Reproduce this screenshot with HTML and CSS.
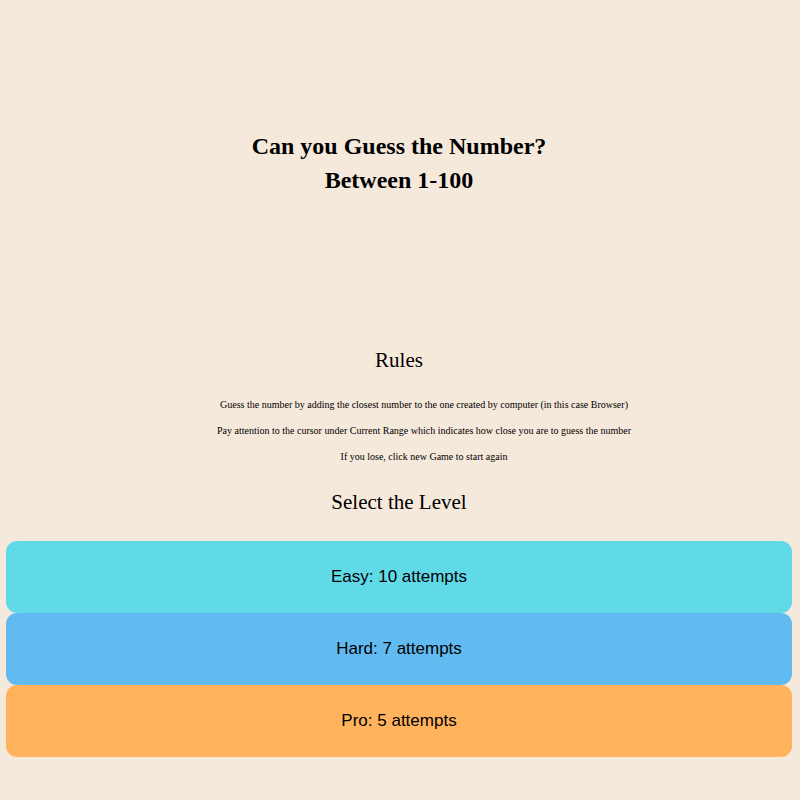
FILE: index.html
```
<!DOCTYPE html>
<html lang="en">
<head>
<meta charset="utf-8">
<meta name="viewport" content="width=device-width, initial-scale=1">
<title>Guess the Number</title>
<link rel="stylesheet" href="styles.css">
</head>
<body>
<header class="title">
<h1>Can you Guess the Number?<br>Between 1-100</h1>
</header>
<main>
<h2>Rules</h2>
<ul class="rules">
<li>Guess the number by adding the closest number to the one created by computer (in this case Browser)</li>
<li>Pay attention to the cursor under Current Range which indicates how close you are to guess the number</li>
<li>If you lose, click new Game to start again</li>
</ul>
<h2>Select the Level</h2>
<div class="levels">
<button type="button" class="level easy">Easy: 10 attempts</button>
<button type="button" class="level hard">Hard: 7 attempts</button>
<button type="button" class="level pro">Pro: 5 attempts</button>
</div>
</main>
</body>
</html>
```
FILE: styles.css
```
* {
  box-sizing: border-box;
}

body {
  margin: 0;
  padding: 129px 8px 40px 6px;
  background: #f5e9dc;
  color: #000;
  font-family: "Liberation Serif", serif;
  text-align: center;
}

.title {
  margin-bottom: 147px;
}

h1 {
  margin: 0;
  font-size: 24px;
  line-height: 34px;
}

h2 {
  margin: 0;
  font-size: 21px;
  font-weight: 400;
  line-height: 32px;
}

.rules {
  margin: 16px 0;
  padding: 0 0 0 50px;
  list-style: none;
  font-size: 10px;
  line-height: 26px;
}

.levels {
  display: flex;
  flex-direction: column;
  margin-top: 23px;
}

.level {
  height: 72px;
  border: 0;
  border-radius: 11px;
  color: #000;
  font-family: "Liberation Sans", sans-serif;
  font-size: 17px;
}

.easy {
  background: #61dae8;
}

.hard {
  background: #62bbf0;
}

.pro {
  background: #ffb35c;
}
```
